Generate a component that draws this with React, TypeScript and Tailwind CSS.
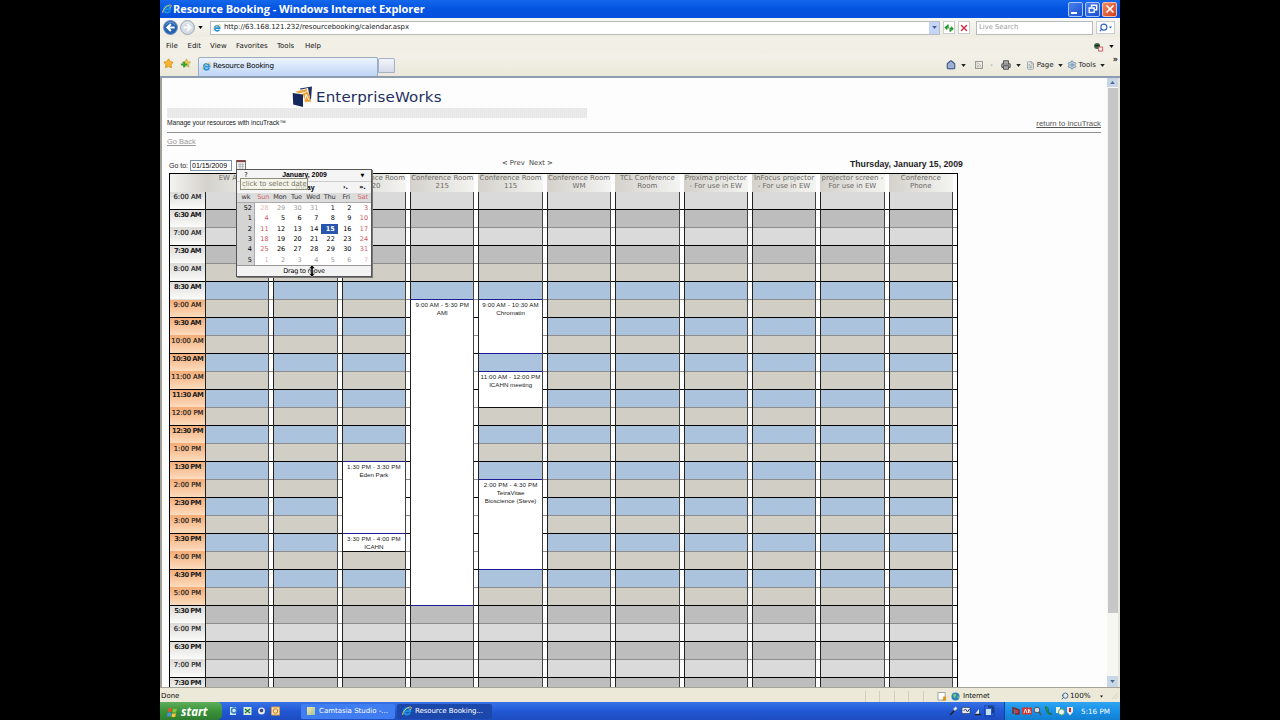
import React from "react";
import clsx from "clsx";
import { Star, Search, Printer, Settings, House, Rss, FileText, X } from "lucide-react";

type Booking = { start: number; slots: number; time: string; lines: string[]; dark?: boolean };
type Resource = { name: string[]; bookings?: Booking[] };

const SLOTS = 28;

// start is the index of the half hour counted from 6:00 AM
const resources: Resource[] = [
	{ name: ["EW Atrium"] },
	{ name: ["Conference Room", "110"] },
	{
		name: ["Conference Room", "120"],
		bookings: [
			{ start: 15, slots: 4, time: "1:30 PM - 3:30 PM", lines: ["Eden Park"] },
			{ start: 19, slots: 1, time: "3:30 PM - 4:00 PM", lines: ["ICAHN"], dark: true },
		],
	},
	{
		name: ["Conference Room", "215"],
		bookings: [{ start: 6, slots: 17, time: "9:00 AM - 5:30 PM", lines: ["AMI"] }],
	},
	{
		name: ["Conference Room", "115"],
		bookings: [
			{ start: 6, slots: 3, time: "9:00 AM - 10:30 AM", lines: ["Chromatin"] },
			{ start: 10, slots: 2, time: "11:00 AM - 12:00 PM", lines: ["ICAHN meeting"], dark: true },
			{ start: 16, slots: 5, time: "2:00 PM - 4:30 PM", lines: ["TetraVitae", "Bioscience (Steve)"] },
		],
	},
	{ name: ["Conference Room", "WM"] },
	{ name: ["TCL Conference", "Room"] },
	{ name: ["Proxima projector", "- For use in EW"] },
	{ name: ["InFocus projector", "- For use in EW"] },
	{ name: ["projector screen -", "For use in EW"] },
	{ name: ["Conference", "Phone"] },
];

const weeks = [
	{ wk: 52, days: [28, 29, 30, 31, 1, 2, 3] },
	{ wk: 1, days: [4, 5, 6, 7, 8, 9, 10] },
	{ wk: 2, days: [11, 12, 13, 14, 15, 16, 17] },
	{ wk: 3, days: [18, 19, 20, 21, 22, 23, 24] },
	{ wk: 4, days: [25, 26, 27, 28, 29, 30, 31] },
	{ wk: 5, days: [1, 2, 3, 4, 5, 6, 7] },
];

const slotLabel = (i: number) => {
	const hour = 6 + Math.floor(i / 2);
	return `${hour > 12 ? hour - 12 : hour}:${i % 2 ? "30" : "00"} ${hour >= 12 ? "PM" : "AM"}`;
};

const slotColor = (i: number) => {
	if (i < 4 || i > 22) return i % 2 ? "bg-[#bdbdbd]" : "bg-[#dadada]";
	return i % 2 ? "bg-[#acc3de]" : "bg-[#d1cec5]";
};

const slotLine = (i: number) => (i % 2 ? "border-[#8d8d8d]" : "border-black");

const IeLogo = ({ className }: { className?: string }) => (
	<svg viewBox="0 0 16 16" className={className} fill="none">
		<path d="M12.8 11A5.200 5.200 0 1 1 13.400 8.300H4" stroke="#1f8fe0" strokeWidth="3.200" />
		<path d="M1.500 14.500C-1 11 8 1 14 1.500c2 1 0 4-1 5" stroke="#e9c75a" strokeWidth="1.500" />
	</svg>
);

const Down = ({ className }: { className?: string }) => (
	<svg viewBox="0 0 6 4" className={clsx("h-[3px] w-[5px] shrink-0", className)}>
		<path d="M0 0h6L3 4z" fill="currentColor" />
	</svg>
);

const Arrow = ({ back }: { back?: boolean }) => (
	<svg viewBox="0 0 16 16" className={clsx("h-[15px] w-[15px]", !back && "-scale-x-100")}>
		<circle cx="8" cy="8" r="7.4" fill={back ? "#2463b4" : "#d5dce4"} stroke={back ? "#6d8fb8" : "#98a4b0"} />
		<path d="M3 5.5a5.5 5.5 0 0 1 10 0" stroke="#fff" strokeOpacity=".4" fill="none" />
		<path d="M8.4 4.2 4.6 8l3.8 3.8M5 8h7.4" stroke={back ? "#fff" : "#f8fafc"} strokeWidth="2.1" fill="none" />
	</svg>
);

const TitleBar = () => (
	<div className="flex h-[18px] items-center bg-linear-to-b from-[#1467ea] via-[#0453e0] to-[#0550dd] pl-[2px] pr-[3px] text-white">
		<IeLogo className="h-[10px] w-[10px]" />
		<span className="ml-px whitespace-nowrap font-['Open_Sans',sans-serif] text-[11px] font-bold leading-[18px] tracking-[-0.006em]">
			Resource Booking - Windows Internet Explorer
		</span>
		<div className="ml-auto flex gap-[2px]">
			<div className="flex h-[15px] w-[15px] items-end rounded-[2px] border border-[#a9c4f5] bg-linear-to-br from-[#4a80ee] to-[#1a4fd0] p-[2px]">
				<div className="h-[2px] w-[6px] bg-white" />
			</div>
			<div className="flex h-[15px] w-[15px] items-center justify-center rounded-[2px] border border-[#a9c4f5] bg-linear-to-br from-[#4a80ee] to-[#1a4fd0]">
				<svg viewBox="0 0 10 10" className="h-[10px] w-[10px]" fill="none" stroke="#fff">
					<path d="M3.5 3V1.3h5.2v4.4H7" strokeWidth="1.4" />
					<path d="M1.2 4h5v4.4h-5z" strokeWidth="1.3" />
				</svg>
			</div>
			<div className="flex h-[15px] w-[15px] items-center justify-center rounded-[2px] border border-[#f0bfae] bg-linear-to-br from-[#f08a66] to-[#d23c12]">
				<X className="h-[12px] w-[12px]" strokeWidth={3.4} />
			</div>
		</div>
	</div>
);

const AddressBar = () => (
	<div className="flex h-[19px] items-center bg-linear-to-b from-[#f7f7f4] to-[#eeece1] pl-[3px] pr-[4px]">
		<Arrow back />
		<div className="ml-[2px]"><Arrow /></div>
		<Down className="ml-[3px] text-black" />
		<div className="ml-[7px] flex h-[14px] w-[730px] items-center border border-[#b8bcc2] bg-white pl-[2px]">
			<IeLogo className="h-[8px] w-[8px]" />
			<span className="ml-[3px] font-['DejaVu_Sans',sans-serif] text-[7px] leading-none tracking-[-0.01em] text-[#222]">
				http://63.168.121.232/resourcebooking/calendar.aspx
			</span>
			<div className="ml-auto flex h-[12px] w-[10px] items-center justify-center bg-[#c5d5f8] text-[#3c5a9a]">
				<Down />
			</div>
		</div>
		<div className="ml-[3px] flex h-[13px] w-[12px] items-center justify-center border border-[#c9cdd0] bg-white">
			<svg viewBox="0 0 10 10" className="h-[10px] w-[10px]">
				<path d="M3.200 1.500h1.500v4H3.200v1.800L.3 4.500 3.200 2zM5.500 4.500h1.800V3l2.500 2.800-2.500 2.700V6.500H7v2.300H5.500z" fill="#279a2d" />
			</svg>
		</div>
		<div className="ml-[3px] flex h-[13px] w-[12px] items-center justify-center border border-[#c9cdd0] bg-white text-[#c9354a]">
			<X className="h-[10px] w-[10px]" strokeWidth={3.5} />
		</div>
		<div className="ml-[6px] flex h-[14px] w-[117px] items-center border border-[#b8bcc2] bg-white pl-[2px] font-['DejaVu_Sans',sans-serif] text-[6.800px] text-[#9a9a9a]">
			Live Search
		</div>
		<div className="ml-[3px] flex h-[13px] w-[19px] items-center justify-between border border-[#c9cdd0] bg-white pl-[2px] pr-[2px] text-[#2c62c4]">
			<Search className="h-[9px] w-[9px] -scale-x-100" strokeWidth={3} />
			<Down className="!w-[3px]" />
		</div>
	</div>
);

const MenuBar = () => (
	<div className="flex h-[18px] items-center bg-[#f1efe6] pl-[6px] pr-[6px] pt-px font-['DejaVu_Sans',sans-serif] text-[7px] leading-none text-[#111]">
		<span className="w-[21.500px]">File</span>
		<span className="w-[22.500px]">Edit</span>
		<span className="w-[26px]">View</span>
		<span className="w-[41px]">Favorites</span>
		<span className="w-[28px]">Tools</span>
		<span>Help</span>
		<svg viewBox="0 0 12 10" className="ml-auto h-[10px] w-[11px]">
			<circle cx="4.500" cy="4" r="3.300" fill="#3f6b4a" />
			<path d="M2 3.500h5" stroke="#222" strokeWidth="1.500" />
			<path d="M6 5h4.500v4.500H6z" fill="#f6e6e4" stroke="#c95b58" />
		</svg>
		<Down className="ml-[5px]" />
	</div>
);

const TabBar = () => (
	<div className="flex h-[23px] border-b-2 border-[#8e9cb2] bg-linear-to-b from-[#f3f1e8] to-[#ebe8da] pl-[3px] pr-[2px] font-['DejaVu_Sans',sans-serif] text-[7px] leading-none">
		<Star className="mt-[3px] h-[11px] w-[11px] fill-[#f7b733] text-[#d98d16]" />
		<div className="ml-[5px] mt-[3px] flex h-[11px] w-[12px] items-center justify-center">
			<svg viewBox="0 0 12 12" className="h-[11px] w-[11px]">
				<path d="M7 1l1.500 3 3 .5-2.200 2 .5 3.500L7 8.500 4 10l.8-3.200L2.500 4.500l3-.5z" fill="#f3cf4a" stroke="#a8902c" strokeWidth=".6" />
				<path d="M4.500 4v6M1 7h7" stroke="#37a23a" strokeWidth="2.200" />
			</svg>
		</div>
		<div className="ml-[7px] mt-[2px] flex h-[19px] w-[180px] items-center rounded-t-[2px] border border-b-0 border-[#9aabc4] bg-linear-to-b from-[#eef4fd] to-[#bdd5f6] pb-[2px] pl-[3px]">
			<IeLogo className="h-[9px] w-[9px]" />
			<span className="ml-[2px] text-[7.200px] tracking-[-0.03em]">Resource Booking</span>
		</div>
		<div className="mt-[3px] h-[15px] w-[17px] rounded-t-[2px] border border-[#a4b1c8] bg-linear-to-b from-[#f3f5fb] to-[#d5dbea]" />
		<div className="ml-auto flex h-[20px] items-center text-[#222]">
			<House className="h-[10px] w-[10px] fill-[#9fb0d4] text-[#3f5688]" strokeWidth={2.600} />
			<Down className="ml-[5px]" />
			<Rss className="ml-[9px] h-[8px] w-[8px] border border-[#999] text-[#999]" strokeWidth={2.500} />
			<Down className="ml-[7px] !w-[3px] text-[#c5c3ba]" />
			<Printer className="ml-[8px] h-[10px] w-[10px] fill-[#aaa] text-[#555]" strokeWidth={2.500} />
			<Down className="ml-[5px]" />
			<FileText className="ml-[5px] h-[9px] w-[9px] text-[#8793a6]" />
			<span className="ml-[2px]">Page</span>
			<Down className="ml-[4px]" />
			<Settings className="ml-[4px] h-[10px] w-[10px] fill-[#c5d5e4] text-[#6a86a4]" />
			<span className="ml-[2px]">Tools</span>
			<Down className="ml-[4px]" />
			<span className="mb-[10px] ml-[8px] text-[8px] font-bold">»</span>
		</div>
	</div>
);

const Logo = () => (
	<div className="flex h-[30px] items-start pl-[125px] pt-[8px]">
		<svg viewBox="0 0 22 22" className="h-[22px] w-[22px]">
			<path d="M8 2.500L20 .5l-1 13-6 1.500z" fill="#1d2f63" />
			<path d="M5 4.500l11-2.500 2.500 13L9 18z" fill="#fff" />
			<path d="M3.500 5.500L15 3l.4 2.200L7 7.500z" fill="#e9a540" />
			<path d="M10.500 7.500l5.500-2 3.200 10.200-6.200.3z" fill="#efa23a" />
			<path d="M12.800 13.500l1.400-5 2.800 5.500" stroke="#fff" fill="none" />
			<path d="M.7 7L11 8.500V21L1.200 18.500z" fill="#15285c" />
		</svg>
		<span className="ml-[2px] mt-[2px] origin-left scale-x-[1.115] font-['DejaVu_Sans',sans-serif] text-[13.500px] leading-[18px] tracking-[0.01em] text-[#1d2f5f]">
			EnterpriseWorks
		</span>
	</div>
);

const CalendarPopup = () => (
	<div className="absolute left-[69px] top-[19px] z-10 flex h-[108px] w-[136px] flex-col border border-[#555] bg-[#f4f4f4] font-['DejaVu_Sans',sans-serif] text-[6.500px] leading-none text-black shadow-[1px_1px_0_#777]">
		<div className="flex h-[12px] items-center border-b border-[#ccc]">
			<span className="w-[18px] text-center">?</span>
			<span className="flex-1 text-center font-['Liberation_Sans',sans-serif] text-[6.800px] font-bold">January, 2009</span>
			<span className="w-[17px] text-center text-[5px]">▼</span>
		</div>
		<div className="flex h-[11px] items-center">
			<span className="w-[18px] text-center">«.</span>
			<span className="w-[17px] text-center">‹.</span>
			<span className="flex-1 text-center font-['Liberation_Sans',sans-serif] text-[7px] font-bold">Today</span>
			<span className="w-[17px] text-center font-bold">›.</span>
			<span className="w-[17px] text-center font-bold">».</span>
		</div>
		<div className="flex h-[10px] items-center border-b border-[#aaa] bg-[#dcdcdc] text-[#333]">
			<span className="w-[18px] text-center">wk</span>
			{["Sun", "Mon", "Tue", "Wed", "Thu", "Fri", "Sat"].map((day) => (
				<span key={day} className={clsx("flex-1 text-center tracking-[-0.02em]", day[0] === "S" && "text-[#d4676b]")}>
					{day}
				</span>
			))}
		</div>
		{weeks.map(({ wk, days }, row) => (
			<div key={wk} className="flex min-h-0 flex-1 bg-white">
				<span className="flex w-[18px] items-center justify-end border-r border-[#aaa] bg-[#d4d4d4] pr-[2px]">{wk}</span>
				{days.map((day, i) => {
					const other = (row === 0 && day > 20) || row === 5;
					const weekend = i === 0 || i === 6;
					return (
						<span
							key={day}
							className={clsx(
								"flex flex-1 items-center justify-end pr-[3px]",
								row === 2 && i === 4 && "bg-[#2a55ad] font-bold text-white",
								other && !weekend && "text-[#9b9b9b]",
								other && weekend && "text-[#e3b3b5]",
								!other && weekend && "text-[#cf5459]"
							)}
						>
							{day}
						</span>
					);
				})}
			</div>
		))}
		<div className="relative flex h-[11px] items-center justify-center border-t border-[#999] bg-[#f3f3f3] tracking-[-0.04em]">
			Drag to move
			<svg viewBox="0 0 8 12" className="absolute left-[71px] top-[-1px] h-[12px] w-[8px]">
				<path d="M4 0l3 3.500H5v5h2L4 12 1 8.500h2v-5H1z" fill="#000" stroke="#fff" strokeWidth=".4" />
			</svg>
		</div>
		<div className="absolute left-[3px] top-[8px] h-[12px] w-[68px] overflow-hidden whitespace-nowrap border border-[#8d8d7c] bg-[#f5f5e6]/85 pl-px pt-[2px] text-[7px] tracking-[-0.01em] text-[#77776a]">
			click to select date
		</div>
	</div>
);

const BookingBlock = ({ booking }: { booking: Booking }) => (
	<div
		className={clsx(
			"relative -mt-px box-border overflow-hidden border-b border-t border-t-[#1c1c96] bg-white pt-px text-center font-['Liberation_Sans',sans-serif] text-[6.200px] leading-[8px] text-[#222]",
			booking.dark ? "border-b-[#111]" : "border-b-[#1c1c96]"
		)}
		style={{ height: booking.slots * 18 + 1 }}
	>
		<div className="-mx-[4px] whitespace-nowrap tracking-[0.02em]">{booking.time}</div>
		{booking.lines.map((line) => (
			<div key={line} className="-mx-[4px] whitespace-nowrap">{line}</div>
		))}
	</div>
);

const ResourceColumn = ({ resource }: { resource: Resource }) => {
	const cells: React.ReactNode[] = [];
	for (let i = 0; i < SLOTS; i++) {
		const booking = resource.bookings?.find((b) => b.start === i);
		if (booking) {
			cells.push(<BookingBlock key={i} booking={booking} />);
			i += booking.slots - 1;
		} else {
			cells.push(<div key={i} className={clsx("h-[18px] border-b", slotColor(i), slotLine(i))} />);
		}
	}
	return (
		<div className="flex min-w-0 flex-1">
			<div className="min-w-0 flex-1">
				<div className="h-[18px] overflow-hidden bg-linear-to-r from-[#d3d1ca] to-[#f4f4f2] pt-px text-center text-[7px] leading-[7.500px] text-[#6c6a66]">
					{resource.name.map((line) => (
						<div key={line} className="-mx-[3px] whitespace-nowrap">{line}</div>
					))}
				</div>
				<div className="border-l border-r border-l-[#222] border-r-[#444]">{cells}</div>
			</div>
			<div className="w-[4px] pt-[18px]">
				{Array.from({ length: SLOTS }, (_, i) => (
					<div key={i} className={clsx("h-[18px] border-b bg-white", slotLine(i))} />
				))}
			</div>
		</div>
	);
};

const Schedule = () => (
	<div className="ml-[2px] flex w-[789px] border-l border-r border-t border-black font-['DejaVu_Sans',sans-serif]">
		<div className="w-[35px] shrink-0">
			<div className="h-[18px] bg-linear-to-r from-[#f3f3f1] to-[#d6d4ce]" />
			{Array.from({ length: SLOTS }, (_, i) => (
				<div
					key={i}
					className={clsx(
						"h-[18px] whitespace-nowrap border-b pt-px text-center text-[6.800px] leading-[8px] text-[#222]",
						i % 2 ? "border-transparent font-bold tracking-[-0.09em]" : "border-black [-webkit-text-stroke:0.2px]",
						i > 5 && i < 23
							? "bg-linear-to-b from-[#f5ae78] to-[#fbdcbe]"
							: "bg-linear-to-b from-[#dddcd9] to-[#fbfbfa]"
					)}
				>
					{slotLabel(i)}
				</div>
			))}
		</div>
		{resources.map((resource, i) => (
			<ResourceColumn key={i} resource={resource} />
		))}
	</div>
);

const Page = () => (
	<div className="h-[609px] flex-1 overflow-hidden bg-[#fdfdfd] pl-[5px] pr-[6px] font-['Liberation_Sans',sans-serif] text-[7px] leading-none text-[#222]">
		<Logo />
		<div className="h-[10px] w-[420px] bg-[repeating-linear-gradient(90deg,#ececec_0_1px,#e6e6e6_1px_2px)]" />
		<div className="flex h-[15px] items-center justify-between border-b border-[#8f8f8f] pb-[3px]">
			<span className="text-[6.700px] tracking-[-0.01em]">Manage your resources with incuTrack™</span>
			<span className="text-[7.800px] text-[#555] underline">return to incuTrack</span>
		</div>
		<div className="flex h-[17px] items-center text-[7.500px] text-[#999] underline">Go Back</div>
		<div className="relative flex h-[23px] pl-[2px] pt-[10px]">
			<span className="mt-[2px] w-[21px]">Go to:</span>
			<span className="h-[11px] w-[42px] border border-[#7b94ad] bg-white pl-px pt-px text-[7px] leading-[8px] text-black">01/15/2009</span>
			<svg viewBox="0 0 10 10" className="ml-[4px] h-[10px] w-[10px]">
				<path d="M.5.500h9v9h-9z" fill="#eee" stroke="#777" />
				<path d="M.5 1.200h9" stroke="#873c3c" strokeWidth="1.800" />
				<path d="M2 4.500h6M2 6.500h6M4 3v6M6.500 3v6" stroke="#aaa" strokeWidth=".7" />
			</svg>
			<span className="ml-[256px] w-[348px] font-['DejaVu_Sans',sans-serif] text-[6.800px] text-[#444]">&lt; Prev&nbsp; Next &gt;</span>
			<span className="whitespace-nowrap text-[8.700px] font-bold">Thursday, January 15, 2009</span>
			<CalendarPopup />
		</div>
		<Schedule />
	</div>
);

const ScrollBar = () => (
	<div className="flex w-[13px] flex-col items-center border-r-2 border-[#e8e6dc] bg-[#f6f6f3]">
		<div className="flex h-[9px] w-[11px] items-center justify-center bg-[#c8d7e8] text-[#4b6888]"><Down className="rotate-180" /></div>
		<div className="mt-px h-[525px] w-[10px] bg-[#c6c6c6]" />
		<div className="mt-auto flex h-[11px] w-[11px] items-center justify-center bg-[#c8d7e8] text-[#4b6888]"><Down /></div>
	</div>
);

const StatusBar = () => (
	<div className="flex h-[15px] items-center border-t border-[#a5a397] bg-[#ece9d8] pl-px pr-[2px] pt-[2px] font-['DejaVu_Sans',sans-serif] text-[7px] leading-none text-[#111]">
		<span>Done</span>
		<div className="ml-auto flex">
			{[0, 1, 2, 3, 4].map((i) => (
				<div key={i} className="h-[11px] w-[14.500px] border-l border-[#d3cfbd]" />
			))}
		</div>
		<svg viewBox="0 0 10 10" className="h-[9px] w-[10px]">
			<path d="M.5.500h8v8.500h-8z" fill="#fff" stroke="#999" />
			<path d="M6.500 5h3v4.500h-4z" fill="#d99a1b" />
		</svg>
		<svg viewBox="0 0 10 10" className="ml-[4px] h-[9px] w-[9px]">
			<circle cx="5" cy="5" r="4.500" fill="#2c86b8" />
			<path d="M2 3l3-1 1 2-2 3zM7 5l2 0-1 3z" fill="#7cc77c" />
		</svg>
		<span className="ml-[3px] w-[92px] tracking-[-0.02em]">Internet</span>
		<Search className="ml-[6px] mr-px h-[8px] w-[8px] -scale-x-100 text-[#3b6ea8]" strokeWidth={3} />
		<span className="w-[30px] text-[7.200px]">100%</span>
		<Down className="mr-[9px] !w-[3px]" />
		<svg viewBox="0 0 8 8" className="h-[8px] w-[6px]"><path d="M8 0L0 8M8 4L4 8" stroke="#b9b5a2" strokeDasharray="1 1" /></svg>
	</div>
);

const TaskBar = () => (
	<div className="flex h-[18px] items-center bg-linear-to-b from-[#3873e6] via-[#2258d5] to-[#1d4cc0] font-['DejaVu_Sans',sans-serif] text-[7px] leading-none text-white">
		<div className="flex h-[18px] w-[62px] items-center rounded-r-[5px] bg-linear-to-b from-[#5fae5b] via-[#3a933a] to-[#2f7d30] pl-[7px] pt-px">
			<svg viewBox="0 0 12 12" className="h-[12px] w-[11px]">
				<path d="M1.500 2q2-1 4 0l-.7 4q-2-1-4 0z" fill="#e8552b" />
				<path d="M6.500 2.300q2 1 4.300 0l-.7 4q-2 1-4.300 0z" fill="#86c440" />
				<path d="M.7 7q2-1 4 0l-.7 4q-2-1-4 0z" fill="#4a8fe8" />
				<path d="M5.500 7.300q2 1 4.300 0l-.7 4q-2 1-4.300 0z" fill="#f6c636" />
			</svg>
			<span className="ml-[3px] pt-px font-['Open_Sans',sans-serif] text-[11.500px] font-bold italic leading-[16px]">start</span>
		</div>
		<div className="ml-[7px] flex w-[72px] gap-[5px]">
			<svg viewBox="0 0 9 10" className="h-[10px] w-[9px]"><path d="M1 1h6v8H1z" fill="#d5e8f8" /><circle cx="5" cy="4.500" r="2.500" fill="none" stroke="#2c7cc4" strokeWidth="1.400" /></svg>
			<svg viewBox="0 0 9 10" className="h-[10px] w-[9px]"><path d="M.5 1h8v8h-8z" fill="#d8ecd8" /><path d="M2 3l5 4M7 3L2 7" stroke="#217a34" strokeWidth="1.500" /></svg>
			<svg viewBox="0 0 9 10" className="h-[10px] w-[9px]"><circle cx="4.500" cy="5" r="3.500" fill="#e6e6ee" /><circle cx="4.500" cy="4.500" r="1.800" fill="#35477c" /></svg>
			<svg viewBox="0 0 9 10" className="h-[10px] w-[9px]"><path d="M.5 1h8v8h-8z" fill="#f7dfb2" stroke="#e09b36" /><circle cx="4.500" cy="5" r="2.300" fill="none" stroke="#c97c1e" /></svg>
		</div>
		<div className="flex h-[15px] w-[94px] items-center rounded-[2px] bg-[#3f7df0] pl-[6px]">
			<div className="h-[8px] w-[8px] bg-linear-to-br from-[#f6e79b] to-[#9fc4a0]" />
			<span className="ml-[4px] whitespace-nowrap pt-px">Camtasia Studio -...</span>
		</div>
		<div className="ml-[2px] flex h-[15px] w-[95px] items-center rounded-[2px] bg-[#1c48ab] pl-[5px]">
			<IeLogo className="h-[10px] w-[10px]" />
			<span className="ml-[3px] whitespace-nowrap pt-px tracking-[-0.01em]">Resource Booking...</span>
		</div>
		<svg viewBox="0 0 46 12" className="ml-auto mr-[9px] h-[12px] w-[46px]">
			<path d="M1 10l5-5" stroke="#222" strokeWidth="1.500" /><path d="M5 5l2.500-2.500" stroke="#ddd" strokeWidth="2.500" />
			<path d="M13 2.500h8v6h-8z" fill="#e8ecf4" stroke="#334" strokeWidth=".6" /><path d="M14.500 6l2-2 2 3 2-3" stroke="#346" fill="none" />
			<path d="M26 9l4-5v5z" fill="#eee" /><path d="M26 9.500h6" stroke="#222" strokeWidth="1.500" />
			<path d="M37 4h5v6h-5z" fill="#c7dcf5" /><path d="M39 2h5v6" stroke="#123" fill="none" /><path d="M35.500.500h10v11h-10z" fill="none" stroke="#173a91" strokeDasharray="1 1" />
		</svg>
		<div className="flex h-[18px] w-[116px] items-center border-l border-[#0f3f9c] bg-linear-to-b from-[#2fa5f2] via-[#1890e8] to-[#1380d2] pl-[7px]">
			<svg viewBox="0 0 64 12" className="h-[12px] w-[64px]">
				<path d="M1 2v7M2 3l5 2v4H3" stroke="#7a2b2b" strokeWidth="1.500" fill="#b44" />
				<path d="M10 2.500h10v7H10z" fill="#cf3a35" /><path d="M12 8l1.500-4L15 8M16.500 8V4l1.500 2V8" stroke="#fff" strokeWidth=".9" fill="none" />
				<circle cx="25" cy="5" r="2.800" fill="#d6dbe4" stroke="#456" /><path d="M27 7l2 3" stroke="#555" strokeWidth="1.500" />
				<path d="M33 2q4 0 3 3t4 4q-5 1-5-3z" fill="#3cae4f" stroke="#1b6a37" />
				<path d="M44 2h4v6h-4z" fill="#e9f2dc" /><circle cx="49.500" cy="7" r="3" fill="#f1f1f1" stroke="#6a6" />
				<path d="M55 2h6v5l-3 3.500L55 7z" fill="#f1e6e4" /><path d="M58 3v4" stroke="#c42f2f" strokeWidth="2" />
			</svg>
			<span className="ml-[5px] whitespace-nowrap pt-px text-[7.200px]">5:16 PM</span>
		</div>
	</div>
);

const App = () => {
	return (
		<div className="flex h-[720px] w-[1280px] justify-center overflow-hidden bg-black">
			<div className="flex h-[720px] w-[960px] flex-col overflow-hidden">
				<TitleBar />
				<AddressBar />
				<MenuBar />
				<TabBar />
				<div className="flex h-[609px] border-l-2 border-[#a09f98]">
					<Page />
					<ScrollBar />
				</div>
				<StatusBar />
				<TaskBar />
			</div>
		</div>
	);
};

export default App;
